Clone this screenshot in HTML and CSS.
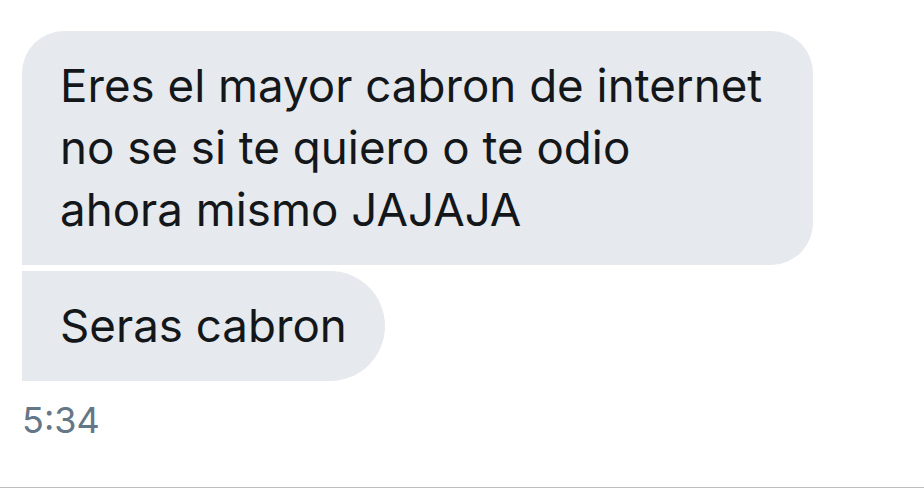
FILE: index.html
```html
<!DOCTYPE html>
<html lang="es">
<head>
    <meta charset="UTF-8">
    <meta name="viewport" content="width=device-width, initial-scale=1.0">
    <title>Mensajes</title>
    <link rel="stylesheet" href="styles.css">
</head>
<body>
    <div class="thread">
        <!-- mensajes recibidos, agrupados -->
        <div class="bubble first">Eres el mayor cabron de internet<br>no se si te quiero o te odio<br>ahora mismo JAJAJA</div>
        <div class="bubble last">Seras cabron</div>
        <div class="time">5:34</div>
    </div>
</body>
</html>
```

FILE: styles.css
```css
* {
    box-sizing: border-box;
}

body {
    margin: 0;
    background: #fff;
    font-family: Inter, "Liberation Sans", sans-serif;
    color: #14171a;
}

.thread {
    height: 488px;
    padding: 31px 0 0 22px;
    border-bottom: 1px solid #bdbdbd;
    display: flex;
    flex-direction: column;
    align-items: flex-start;
    gap: 6px;
}

.bubble {
    background-color: #e6e9ed;
    font-size: 45.7px;
    line-height: 62px;
    padding: 24px 38px;
}

/* primer mensaje del grupo: esquina inferior izquierda recta */
.bubble.first {
    border-radius: 42px 42px 42px 0;
    padding-right: 51px;
}

/* ultimo mensaje: forma de pastilla a la derecha */
.bubble.last {
    border-radius: 0 56px 56px 0;
}

.time {
    margin-top: 11px;
    font-size: 36px;
    line-height: 44px;
    color: #657786;
}
```
